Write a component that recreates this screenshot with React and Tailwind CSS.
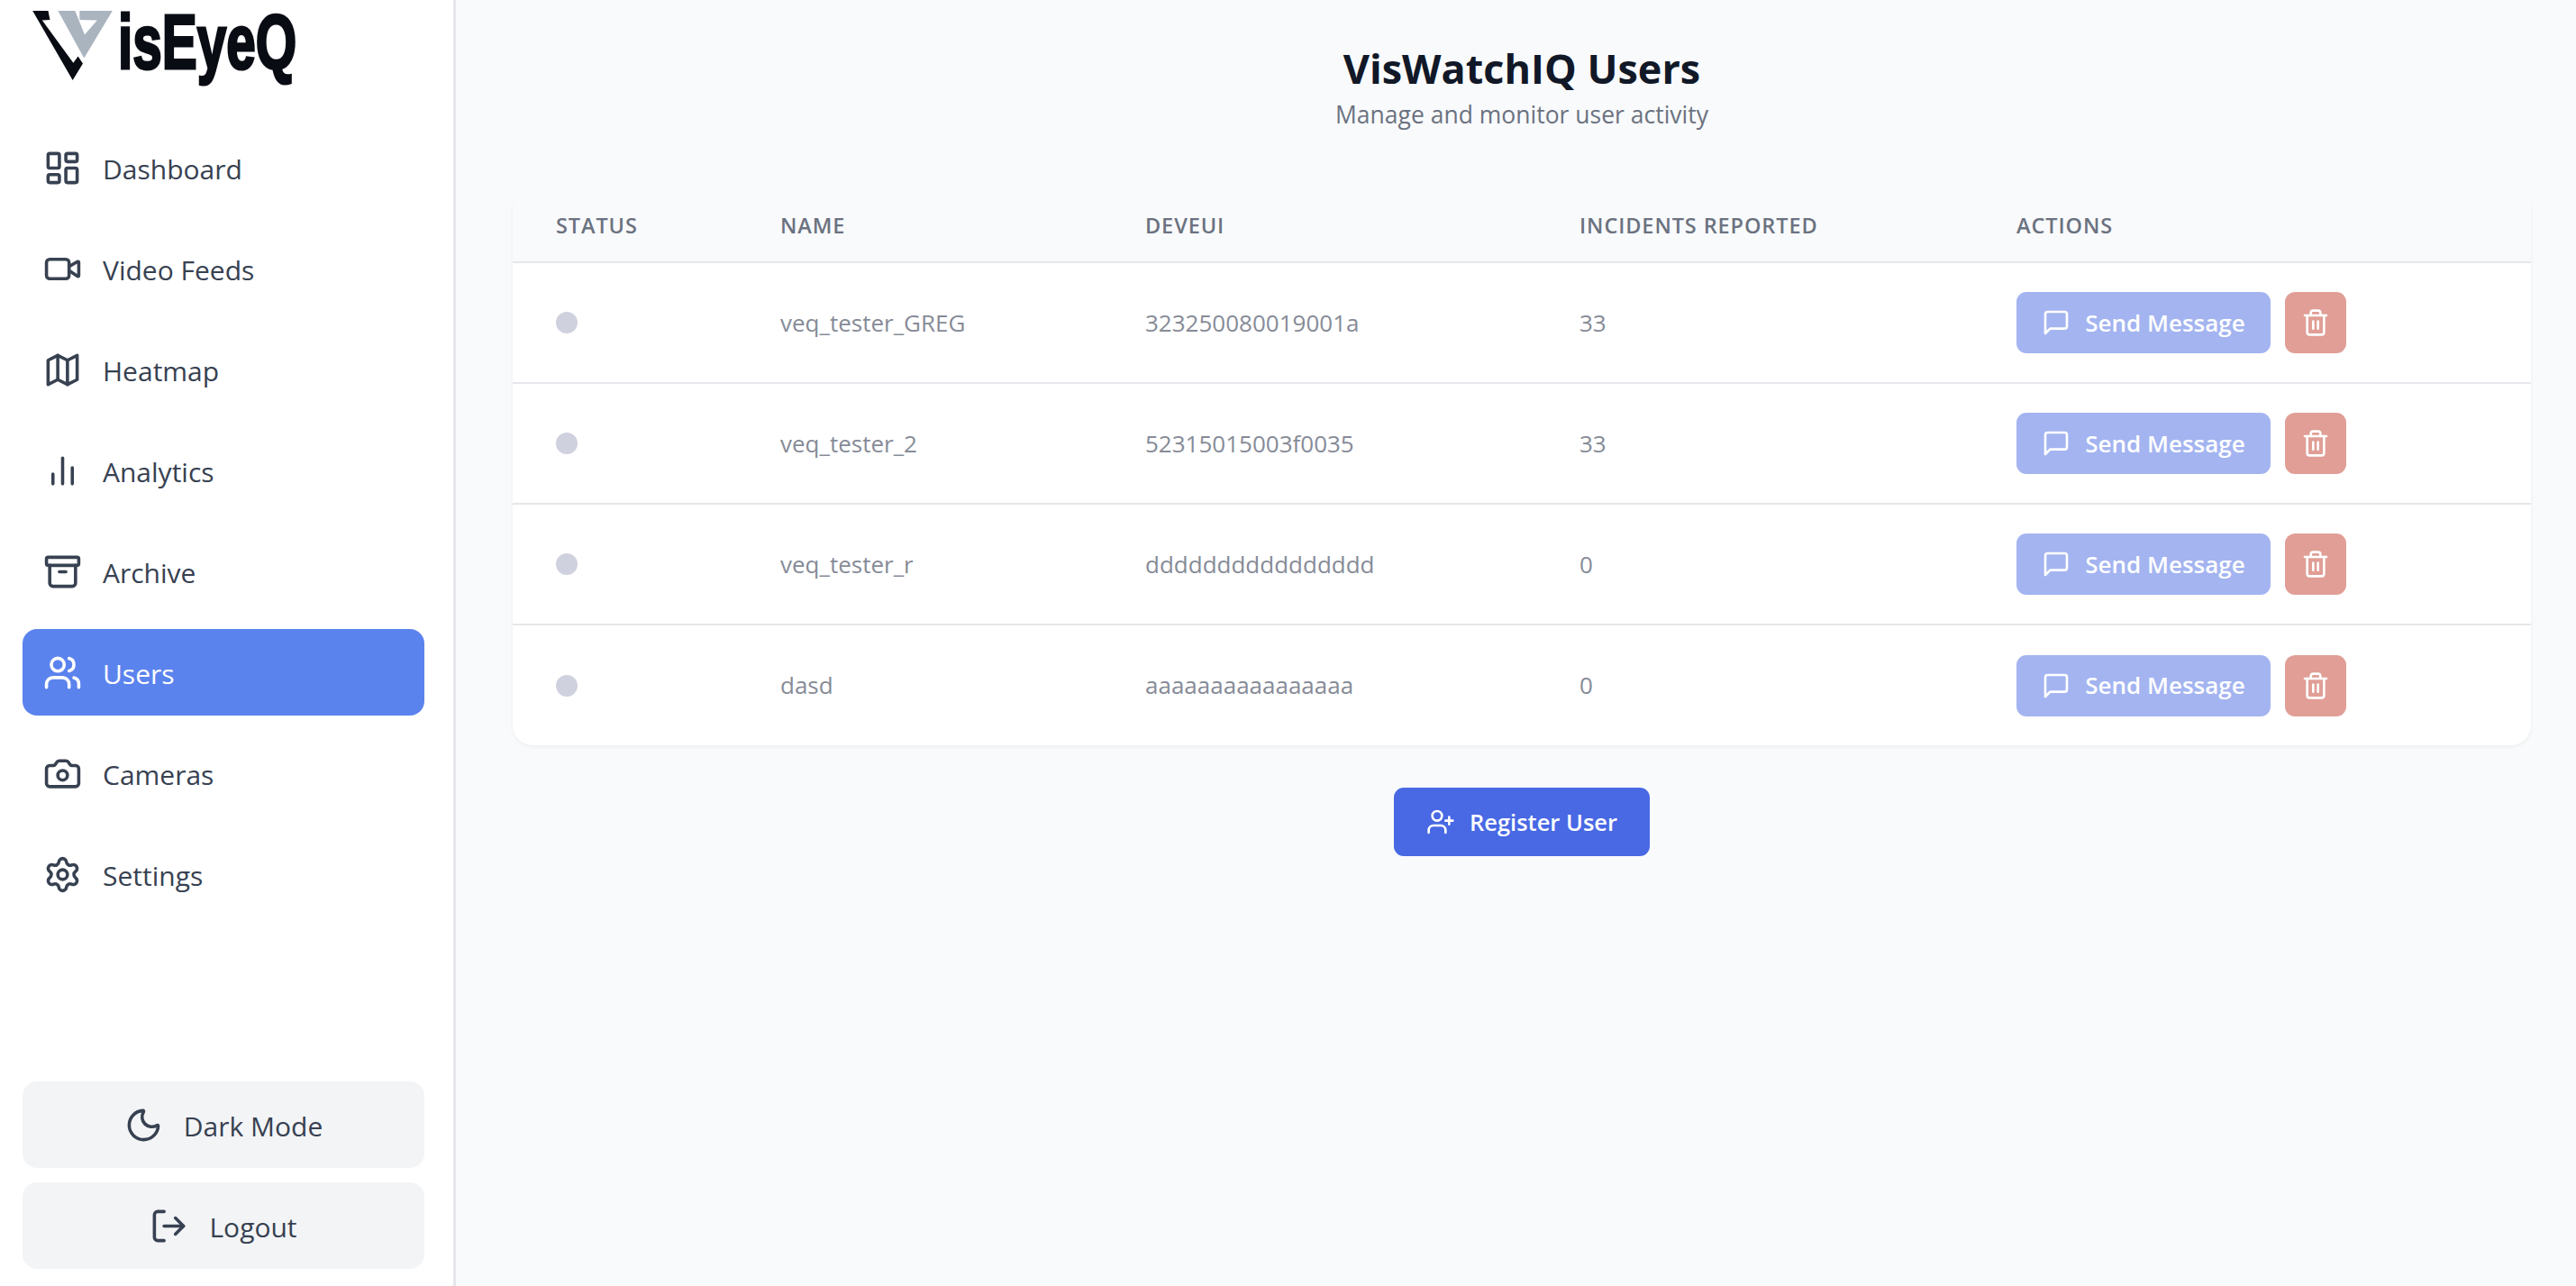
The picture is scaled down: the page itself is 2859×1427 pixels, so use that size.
import {
  LayoutDashboard, Video, Archive, Users, Camera, Settings,
  Moon, LogOut, Trash2, UserPlus,
} from 'lucide-react';

// older lucide shapes, the current package draws these a bit differently
const iconProps = {
  viewBox: '0 0 24 24',
  fill: 'none',
  stroke: 'currentColor',
  strokeWidth: 2,
  strokeLinecap: 'round',
  strokeLinejoin: 'round',
};

const MapIcon = ({ className }) => (
  <svg {...iconProps} className={className}>
    <polygon points="3 6 9 3 15 6 21 3 21 18 15 21 9 18 3 21" />
    <line x1="9" x2="9" y1="3" y2="18" />
    <line x1="15" x2="15" y1="6" y2="21" />
  </svg>
);

const BarsIcon = ({ className }) => (
  <svg {...iconProps} className={className}>
    <line x1="18" x2="18" y1="20" y2="10" />
    <line x1="12" x2="12" y1="20" y2="4" />
    <line x1="6" x2="6" y1="20" y2="14" />
  </svg>
);

const MessageIcon = ({ className }) => (
  <svg {...iconProps} className={className}>
    <path d="M21 15a2 2 0 0 1-2 2H7l-4 4V5a2 2 0 0 1 2-2h14a2 2 0 0 1 2 2z" />
  </svg>
);

const navItems = [
  { label: 'Dashboard', icon: LayoutDashboard },
  { label: 'Video Feeds', icon: Video },
  { label: 'Heatmap', icon: MapIcon },
  { label: 'Analytics', icon: BarsIcon },
  { label: 'Archive', icon: Archive },
  { label: 'Users', icon: Users, active: true },
  { label: 'Cameras', icon: Camera },
  { label: 'Settings', icon: Settings },
];

const users = [
  { name: 'veq_tester_GREG', devEui: '323250080019001a', incidents: 33 },
  { name: 'veq_tester_2', devEui: '52315015003f0035', incidents: 33 },
  { name: 'veq_tester_r', devEui: 'dddddddddddddddd', incidents: 0 },
  { name: 'dasd', devEui: 'aaaaaaaaaaaaaaaa', incidents: 0 },
];

const Logo = () => (
  <div className="flex items-start h-[80px] pl-[36px]">
    <svg viewBox="48 38 270 232" className="w-[90px] h-[77px] mt-[2px] shrink-0">
      <path d="M48 38 L100 38 L106 68 L80 70 L184 212 L200 190 L216 214 L182 270 Z" fill="#0a0c14" />
      <path d="M133 38 L190 38 L222 118 L264 70 L205 68 L205 38 L315 38 L220 196 Z" fill="#a9b4bf" />
    </svg>
    <div className="ml-[5px] w-[197px] h-[80px] overflow-visible">
      <span className="inline-block -mt-[4px] origin-top-left scale-x-[0.68] text-[86px] leading-[80px] font-bold text-[#0a0c14] [-webkit-text-stroke:3px_#0a0c14] font-['Liberation_Sans',sans-serif]">
        isEyeQ
      </span>
    </div>
  </div>
);

const Sidebar = () => (
  <aside className="w-[506px] shrink-0 bg-white border-r-[3px] border-[#e5e7eb] flex flex-col pb-[19px]">
    <div className="pt-[10px]">
      <Logo />
    </div>
    <nav className="mt-[48px] pl-[25px] pr-[32px] flex flex-col gap-4">
      {navItems.map((item) => {
        const Icon = item.icon;
        return (
          <div
            key={item.label}
            className={`h-[96px] rounded-[16px] pl-[23px] flex items-center gap-[23px] ${
              item.active ? 'bg-[#5b83ee] text-white' : 'text-[#374151]'
            }`}
          >
            <Icon className="w-[43px] h-[43px] shrink-0" />
            <span className="text-[30px] pt-[2px]">{item.label}</span>
          </div>
        );
      })}
    </nav>
    <div className="mt-auto pl-[25px] pr-[32px] flex flex-col gap-4 text-[#374151]">
      <button className="h-[96px] rounded-[16px] bg-[#f3f4f6] flex items-center justify-center gap-[23px]">
        <Moon className="w-[43px] h-[43px]" />
        <span className="text-[30px] pt-[2px]">Dark Mode</span>
      </button>
      <button className="h-[96px] rounded-[16px] bg-[#f3f4f6] flex items-center justify-center gap-[23px]">
        <LogOut className="w-[43px] h-[43px]" />
        <span className="text-[30px] pt-[2px]">Logout</span>
      </button>
    </div>
  </aside>
);

const UsersTable = () => (
  <div className="rounded-[22px] bg-white shadow-[0_2px_4px_rgba(0,0,0,0.05)] overflow-hidden">
    <table className="w-full table-fixed text-left">
      <thead className="bg-[#f9fafc]">
        <tr className="h-[79px] border-b-[2px] border-[#e5e7eb] text-[23.5px] tracking-[0.9px] text-[#6b7280]">
          <th className="w-[249px] pl-[48px] font-semibold">STATUS</th>
          <th className="w-[405px] pl-[48px] font-semibold">NAME</th>
          <th className="w-[482px] pl-[48px] font-semibold">DEVEUI</th>
          <th className="w-[485px] pl-[48px] font-semibold">INCIDENTS REPORTED</th>
          <th className="pl-[48px] font-semibold">ACTIONS</th>
        </tr>
      </thead>
      <tbody className="text-[26px] text-[#868b97]">
        {users.map((user, i) => (
          <tr key={user.name} className={`h-[134px] ${i < users.length - 1 ? 'border-b-[2px] border-[#e5e7eb]' : ''}`}>
            <td className="pl-[48px]">
              <div className="w-6 h-6 rounded-full bg-[#cfd1de]" />
            </td>
            <td className="pl-[48px]">{user.name}</td>
            <td className="pl-[48px]">{user.devEui}</td>
            <td className="pl-[48px]">{user.incidents}</td>
            <td className="pl-[48px]">
              <div className="flex items-center gap-4">
                <button className="w-[282px] h-[68px] rounded-[11px] bg-[#a3b4f0] text-white text-[26px] font-semibold flex items-center justify-center gap-4">
                  <MessageIcon className="w-8 h-8" />
                  Send Message
                </button>
                <button className="w-[68px] h-[68px] rounded-[11px] bg-[#e09e96] text-white flex items-center justify-center">
                  <Trash2 className="w-8 h-8" />
                </button>
              </div>
            </td>
          </tr>
        ))}
      </tbody>
    </table>
  </div>
);

const App = () => (
  <div className="flex h-screen bg-[#f9fafc] font-['Open_Sans','Noto_Sans',sans-serif]">
    <Sidebar />
    <main className="flex-1 pl-[63px] pr-[50px] pt-[43px]">
      <div className="text-center">
        <h1 className="text-[45px] leading-[66px] font-bold text-[#111827]">VisWatchIQ Users</h1>
        <p className="text-[26.5px] leading-[36px] text-[#6b7280]">Manage and monitor user activity</p>
      </div>
      <div className="mt-[67px]">
        <UsersTable />
      </div>
      <div className="mt-[47px] flex justify-center">
        <button className="w-[284px] h-[76px] rounded-[11px] bg-[#4868e4] text-white text-[25.5px] font-semibold flex items-center justify-center gap-4">
          <UserPlus className="w-8 h-8" />
          Register User
        </button>
      </div>
    </main>
  </div>
);

export default App;
